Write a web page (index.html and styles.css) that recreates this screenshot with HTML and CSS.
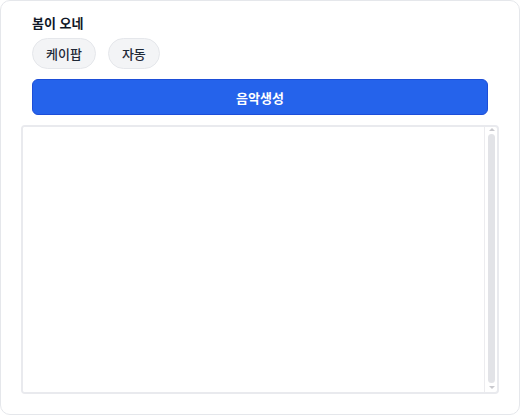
FILE: index.html
```html
<!DOCTYPE html>
<html lang="ko">
<head>
<meta charset="utf-8">
<link rel="stylesheet" href="styles.css">
</head>
<body>
<div class="card">
  <div class="section">
    <div class="title">봄이 오네</div>
    <div class="chips">
      <span class="chip">케이팝</span>
      <span class="chip">자동</span>
    </div>
    <button class="generate">음악생성</button>
  </div>
  <div class="output-box">
    <textarea class="output"></textarea>
    <div class="scrollbar">
      <span class="arrow up"></span>
      <span class="thumb"></span>
      <span class="arrow down"></span>
    </div>
  </div>
</div>
</body>
</html>
```

FILE: styles.css
```css
* { box-sizing: border-box; }
html, body { margin: 0; padding: 0; background: #fff; }
body {
  font-family: "Noto Sans CJK KR", "Noto Sans", sans-serif;
  color: #111827;
}
.card {
  width: 520px;
  height: 415px;
  border: 1px solid #e5e7eb;
  border-radius: 10px;
  padding: 12px 20px 20px 20px;
  display: flex;
  flex-direction: column;
}
.section {
  padding: 0 11px;
  display: flex;
  flex-direction: column;
}
.title {
  font-size: 13px;
  font-weight: 700;
  line-height: 20px;
}
.chips {
  display: flex;
  gap: 12px;
  margin-top: 5px;
}
.chip {
  height: 31px;
  padding: 0 13px;
  border: 1px solid #e5e7eb;
  background: #f3f4f6;
  border-radius: 16px;
  font-size: 13px;
  font-weight: 500;
  line-height: 29px;
  color: #1f2937;
}
.generate {
  margin-top: 10px;
  height: 36px;
  border: 1px solid #1d4ed8;
  border-radius: 6px;
  background: #2563eb;
  color: #fff;
  font-family: inherit;
  font-size: 13px;
  font-weight: 700;
}
.output-box {
  margin-top: 10px;
  flex: 1;
  display: flex;
  border: 2px solid #e9eaee;
  border-radius: 4px;
  overflow: hidden;
}
.output {
  flex: 1;
  border: none;
  resize: none;
  outline: none;
  padding: 0;
  font-family: inherit;
  font-size: 13px;
}
.scrollbar {
  width: 13px;
  border-left: 1px solid #ececef;
  display: flex;
  flex-direction: column;
  align-items: center;
  padding: 1px 0 3px 1px;
}
.arrow {
  width: 0;
  height: 0;
  border-left: 3px solid transparent;
  border-right: 3px solid transparent;
}
.arrow.up { border-bottom: 3px solid #c9c9ce; }
.arrow.down { border-top: 3px solid #c9c9ce; margin-top: 3px; }
.thumb {
  flex: 1;
  width: 7px;
  margin-top: 3px;
  border-radius: 4px;
  background: #e2e3e7;
}
```
